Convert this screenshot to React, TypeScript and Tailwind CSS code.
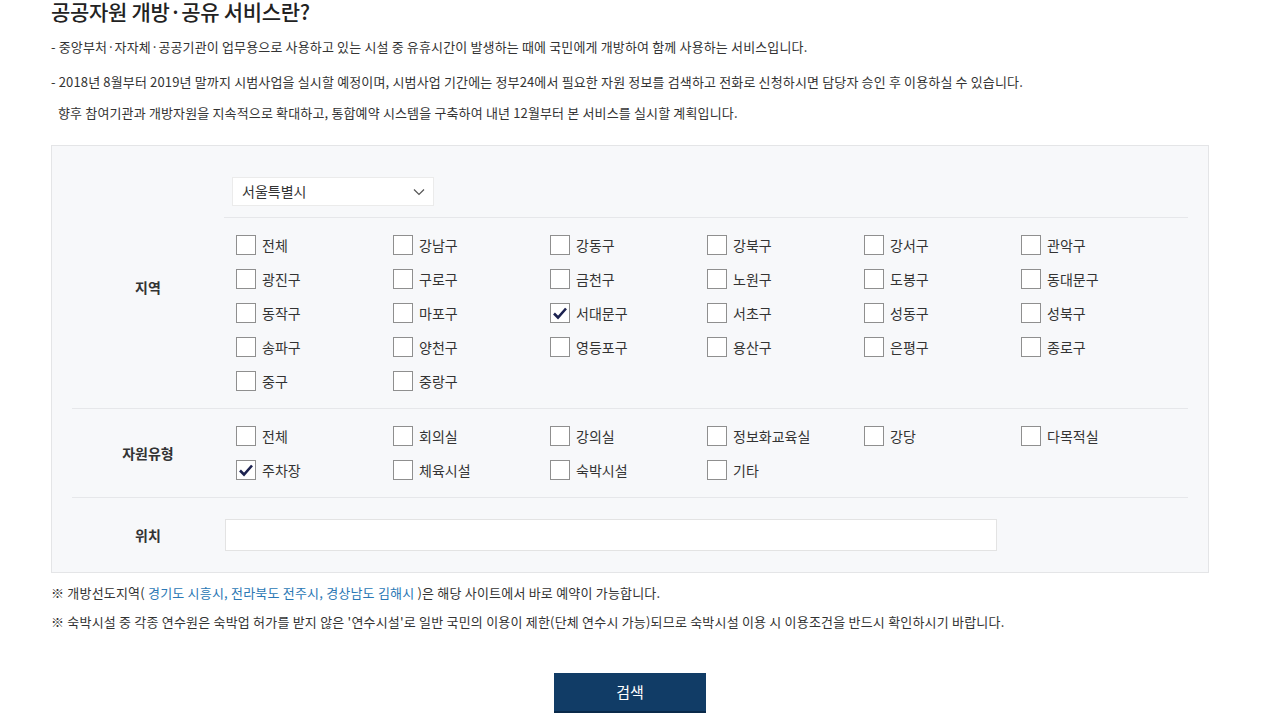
import React, { useState } from 'react';

const regions = [
  '전체', '강남구', '강동구', '강북구', '강서구', '관악구',
  '광진구', '구로구', '금천구', '노원구', '도봉구', '동대문구',
  '동작구', '마포구', '서대문구', '서초구', '성동구', '성북구',
  '송파구', '양천구', '영등포구', '용산구', '은평구', '종로구',
  '중구', '중랑구',
];

const types = ['전체', '회의실', '강의실', '정보화교육실', '강당', '다목적실', '주차장', '체육시설', '숙박시설', '기타'];

const Check: React.FC<{ label: string; checked: boolean; onToggle: () => void }> = ({ label, checked, onToggle }) => (
  <label className="flex items-center h-[34px] cursor-pointer" onClick={onToggle}>
    <span className="w-[20px] h-[20px] bg-white border border-[#8f8f8f] flex items-center justify-center shrink-0">
      {checked && (
        <svg width="16" height="14" viewBox="0 0 16 14">
          <path d="M2 7.5 L6 11.5 L14 2.5" fill="none" stroke="#1c2250" strokeWidth="2.6" />
        </svg>
      )}
    </span>
    <span className="ml-[6px] text-[14px] text-[#333]">{label}</span>
  </label>
);

const App: React.FC = () => {
  const [regionChecked, setRegionChecked] = useState<string[]>(['서대문구']);
  const [typeChecked, setTypeChecked] = useState<string[]>(['주차장']);

  const toggle = (list: string[], set: (v: string[]) => void, v: string) => {
    set(list.includes(v) ? list.filter((x) => x !== v) : [...list, v]);
  };

  return (
    <div className="bg-white min-h-[725px] font-['Noto_Sans_CJK_KR','Noto_Sans',sans-serif] text-[#333]">
      <div className="w-[1158px] ml-[51px]">
        <h2 className="text-[21px] leading-[23px] font-medium text-[#222] tracking-[-0.3px]">공공자원 개방·공유 서비스란?</h2>

        <ul className="mt-[8px] text-[13px] tracking-[0.15px] text-[#333]">
          <li className="leading-[31px]">- 중앙부처·자자체·공공기관이 업무용으로 사용하고 있는 시설 중 유휴시간이 발생하는 때에 국민에게 개방하여 함께 사용하는 서비스입니다.</li>
          <li className="leading-[31px] mt-[4px]">
            - 2018년 8월부터 2019년 말까지 시범사업을 실시할 예정이며, 시범사업 기간에는 정부24에서 필요한 자원 정보를 검색하고 전화로 신청하시면 담당자 승인 후 이용하실 수 있습니다.
            <br />
            <span className="pl-[7px]">향후 참여기관과 개방자원을 지속적으로 확대하고, 통합예약 시스템을 구축하여 내년 12월부터 본 서비스를 실시할 계획입니다.</span>
          </li>
        </ul>

        {/* 검색 조건 */}
        <div className="mt-[17px] bg-[#f7f8fa] border border-[#e4e5e7] px-[20px]">
          <div className="flex border-b border-[#e6e7ea]">
            <div className="w-[152px] flex items-start justify-center text-[14px] font-bold pt-[131px]">지역</div>
            <div className="flex-1">
              <div className="pt-[31px] pb-[11px] border-b border-[#e6e7ea] pl-[8px]">
                <div className="w-[202px] h-[29px] bg-white border border-[#ebebeb] flex items-center justify-between pl-[9px] pr-[8px] text-[14px]">
                  <span>서울특별시</span>
                  <svg width="12" height="8" viewBox="0 0 12 8">
                    <path d="M1 1.5 L6 6.5 L11 1.5" fill="none" stroke="#555" strokeWidth="1.2" />
                  </svg>
                </div>
              </div>
              <div className="grid grid-cols-[repeat(6,157px)] pl-[12px] pt-[10px] pb-[10px]">
                {regions.map((r) => (
                  <Check key={r} label={r} checked={regionChecked.includes(r)} onToggle={() => toggle(regionChecked, setRegionChecked, r)} />
                ))}
              </div>
            </div>
          </div>

          <div className="flex border-b border-[#e6e7ea]">
            <div className="w-[152px] flex items-center justify-center text-[14px] font-bold">자원유형</div>
            <div className="flex-1 grid grid-cols-[repeat(6,157px)] pl-[12px] pt-[10px] pb-[10px]">
              {types.map((t) => (
                <Check key={t} label={t} checked={typeChecked.includes(t)} onToggle={() => toggle(typeChecked, setTypeChecked, t)} />
              ))}
            </div>
          </div>

          <div className="flex py-[21px]">
            <div className="w-[152px] flex items-center justify-center text-[14px] font-bold">위치</div>
            <input type="text" className="ml-[1px] w-[772px] h-[32px] bg-white border border-[#e3e3e3] outline-none px-2 text-[14px]" />
          </div>
        </div>

        <div className="mt-[5px] text-[13px] tracking-[0.2px] leading-[29px]">
          <p>
            ※ 개방선도지역( <span className="text-[#2b78b5]">경기도 시흥시, 전라북도 전주시, 경상남도 김해시</span> )은 해당 사이트에서 바로 예약이 가능합니다.
          </p>
          <p>※ 숙박시설 중 각종 연수원은 숙박업 허가를 받지 않은 '연수시설'로 일반 국민의 이용이 제한(단체 연수시 가능)되므로 숙박시설 이용 시 이용조건을 반드시 확인하시기 바랍니다.</p>
        </div>

        <div className="flex justify-center mt-[37px]">
          <button className="w-[152px] h-[40px] bg-[#113c66] text-white text-[15px] border-b-2 border-[#0a2a4a]">검색</button>
        </div>
      </div>
    </div>
  );
};

export default App;
